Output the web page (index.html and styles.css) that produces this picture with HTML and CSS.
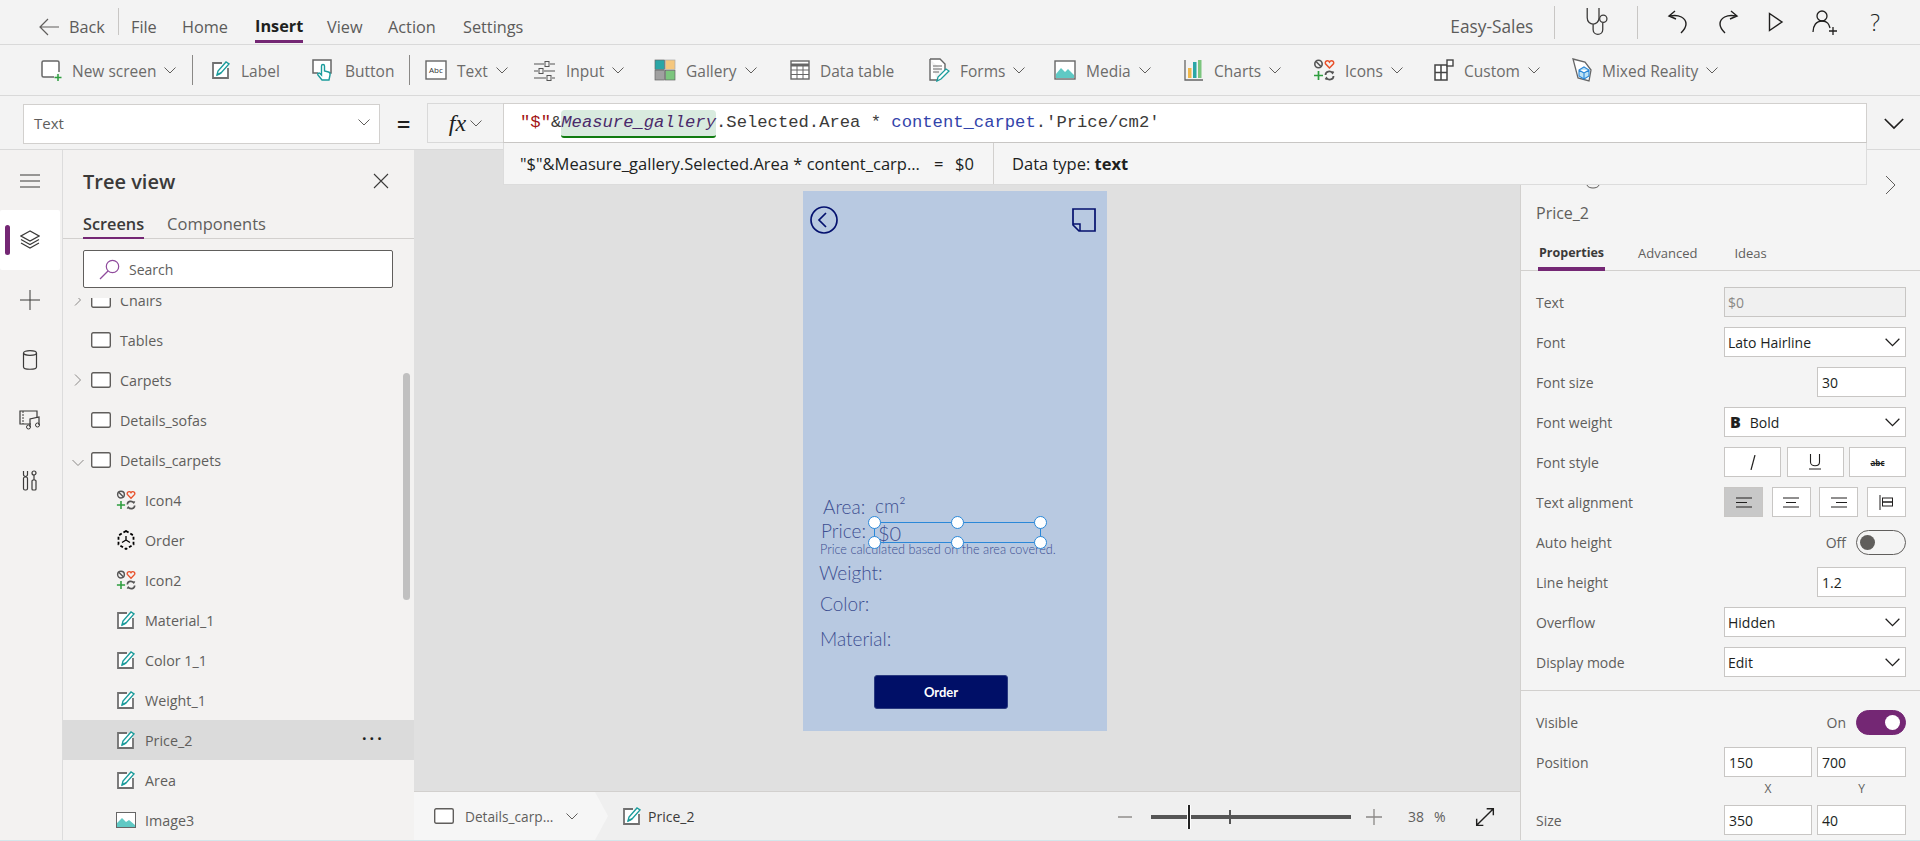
FILE: index.html
```html
<!DOCTYPE html>
<html lang="en">
<head>
<meta charset="utf-8">
<title>Easy-Sales</title>
<link rel="stylesheet" href="styles.css">
</head>
<body>
<svg class="defs" width="0" height="0" aria-hidden="true">
  <symbol id="chev" viewBox="0 0 12 7"><path d="M.5.5 6 6l5.500-5.500" fill="none" stroke="currentColor"/></symbol>
  <symbol id="screen" viewBox="0 0 20 16"><rect x=".7" y=".7" width="18.600" height="14.600" rx="1.500" fill="#fff" stroke="#605e5c" stroke-width="1.400"/></symbol>
  <symbol id="label" viewBox="0 0 20 20"><path d="M11 3H2v15h15V8" fill="#fff" stroke="#707070" stroke-width="1.800"/><path d="M6 15l1-4 8-9 3 2-8 9z" fill="#fff" stroke="#1b9c9c" stroke-width="1.400"/><path d="M6 15l4-2" stroke="#1b9c9c" stroke-width="1.400"/></symbol>
  <symbol id="multi" viewBox="0 0 22 22"><circle cx="5.500" cy="5" r="3.700" fill="none" stroke="#555" stroke-width="1.600"/><path d="M3 2.500l5 5" stroke="#555" stroke-width="1.600"/><path d="M16.500 9l-4-4.200c-1.200-2.800 2.700-4 4-1.800 1.300-2.200 5.200-1 4 1.800z" fill="none" stroke="#e8502a" stroke-width="1.500"/><path d="M5.500 12v9M1 16.500h9" stroke="#2e9e3f" stroke-width="1.700"/><path d="M12.500 16c0-4 5-4.500 7-2l1-1.500M20.500 17c0 4-5 4.500-7 2l-1 1.500" fill="none" stroke="#555" stroke-width="1.800"/></symbol>
</svg>
<div class="app">
  <header class="menu">
    <nav class="menu-left">
      <svg class="back-arrow" width="20" height="18" viewBox="0 0 20 18"><path d="M9 1 1 9l8 8M1 9h19" fill="none" stroke="#605e5c" stroke-width="1.200"/></svg>
      <span class="m-back">Back</span>
      <span class="vsep"></span>
      <span class="m-file">File</span>
      <span class="m-home">Home</span>
      <span class="m-insert">Insert</span>
      <span class="m-view">View</span>
      <span class="m-action">Action</span>
      <span class="m-settings">Settings</span>
    </nav>
    <div class="menu-right">
      <span class="app-name">Easy-Sales</span>
      <span class="vsep tall"></span>
      <svg class="steth" width="30" height="30" viewBox="0 0 26 28"><path d="M2 1v9c0 4 3 6 5.500 6S13 14 13 10V1M7.500 16v5c0 6 9 6 9 0v-6" fill="none" stroke="#3b3a39" stroke-width="1.200"/><circle cx="17" cy="11" r="3.400" fill="none" stroke="#3b3a39" stroke-width="1.200"/></svg>
      <span class="vsep tall"></span>
      <svg class="undo" width="22" height="24" viewBox="0 0 22 24"><path d="M8 1 2 6l7 3M3 6c9-2 16 2 16 8 0 4-3 7-5 9" fill="none" stroke="#201f1e" stroke-width="1.400"/></svg>
      <svg class="redo" width="22" height="24" viewBox="0 0 22 24"><path d="M14 1l6 5-7 3M19 6C10 4 3 8 3 14c0 4 3 7 5 9" fill="none" stroke="#201f1e" stroke-width="1.400"/></svg>
      <svg class="play" width="16" height="20" viewBox="0 0 16 20"><path d="M1.500 1.500v17L14 10z" fill="none" stroke="#201f1e" stroke-width="1.400"/></svg>
      <svg class="user" width="26" height="26" viewBox="0 0 26 26"><circle cx="10" cy="7" r="5" fill="none" stroke="#201f1e" stroke-width="1.300"/><path d="M1 23c0-6 3-11 9-11s7 4 8 7" fill="none" stroke="#201f1e" stroke-width="1.300"/><path d="M21 18v8M17 22h8" stroke="#201f1e" stroke-width="1.300"/></svg>
      <span class="help">?</span>
    </div>
  </header>

  <div class="toolbar">
    <div class="tool"><svg class="ti" width="22" height="22" viewBox="0 0 22 22"><path d="M14 18H3.500A1.500 1.500 0 0 1 2 16.500v-13A1.500 1.500 0 0 1 3.500 2h14A1.500 1.500 0 0 1 19 3.500V13" fill="#fff" stroke="#666" stroke-width="1.500"/><path d="M18 15v7M14.500 18.500h7" stroke="#2e9e3f" stroke-width="1.500"/></svg><span>New screen</span><svg class="chev"><use href="#chev"/></svg></div>
    <span class="tsep"></span>
    <div class="tool"><svg class="ti" width="20" height="20"><use href="#label"/></svg><span>Label</span></div>
    <div class="tool"><svg class="ti" width="24" height="24" viewBox="0 0 24 24"><path d="M7 15H2V2h18v13h-2" fill="#fff" stroke="#666" stroke-width="1.500"/><path d="M11 22l-4-5c-1-1.500 1-2.500 2-1.500l1.500 1.500V8c0-2 3-2 3 0v5l4 1c1.500.5 2 1 1.500 3l-1 5z" fill="#fff" stroke="#1b9c9c" stroke-width="1.400"/></svg><span>Button</span></div>
    <span class="tsep"></span>
    <div class="tool"><svg class="ti" width="22" height="20" viewBox="0 0 22 20"><rect x="1" y="1" width="20" height="18" fill="#fff" stroke="#666" stroke-width="1.400"/><text x="4" y="13" class="abc">Abc</text></svg><span>Text</span><svg class="chev"><use href="#chev"/></svg></div>
    <div class="tool"><svg class="ti" width="22" height="22" viewBox="0 0 22 22"><path d="M0 5h10M16 5h5M0 12h4M10 12h11M0 19h12M18 19h3" stroke="#555" stroke-width="1.200"/><rect x="11" y="2.500" width="4" height="5" fill="none" stroke="#555"/><rect x="5" y="9.500" width="4" height="5" fill="none" stroke="#555"/><rect x="13" y="16.500" width="4" height="5" fill="none" stroke="#555"/></svg><span>Input</span><svg class="chev"><use href="#chev"/></svg></div>
    <div class="tool"><svg class="ti" width="22" height="22" viewBox="0 0 22 22"><rect x="1" y="1" width="9.500" height="9.500" fill="#2aa6a6" stroke="#666" stroke-width=".7"/><rect x="11.500" y="1" width="9.500" height="9.500" fill="#f5c77e" stroke="#aaa" stroke-width=".7"/><rect x="1" y="11.500" width="9.500" height="9.500" fill="#a0a0a0" stroke="#666" stroke-width=".7"/><rect x="11.500" y="11.500" width="9.500" height="9.500" fill="#7cc57e" stroke="#666" stroke-width=".7"/></svg><span>Gallery</span><svg class="chev"><use href="#chev"/></svg></div>
    <div class="tool"><svg class="ti" width="20" height="20" viewBox="0 0 20 20"><rect x="1" y="1" width="18" height="18" fill="#fff" stroke="#666" stroke-width="1.400"/><path d="M1 5h18" stroke="#666" stroke-width="3"/><path d="M1 10h18M1 14.500h18M7 5v14M13 5v14" stroke="#666"/></svg><span>Data table</span></div>
    <div class="tool"><svg class="ti" width="22" height="24" viewBox="0 0 22 24"><path d="M2 1h10l5 5v9M9 22H2V1" fill="#fff" stroke="#666" stroke-width="1.400"/><path d="M5 8h9M5 11h9M5 14h6" stroke="#666"/><path d="M9 23l1-4 8-8 3 2-8 8z" fill="#fff" stroke="#1b9c9c" stroke-width="1.300"/></svg><span>Forms</span><svg class="chev"><use href="#chev"/></svg></div>
    <div class="tool"><svg class="ti" width="22" height="20" viewBox="0 0 22 20"><rect x="1" y="1" width="20" height="18" fill="#fff" stroke="#666" stroke-width="1.400"/><path d="M2 18v-4l5-6 4 4 3-3 6 6v3z" fill="#5fc9c4"/></svg><span>Media</span><svg class="chev"><use href="#chev"/></svg></div>
    <div class="tool"><svg class="ti" width="20" height="22" viewBox="0 0 20 22"><path d="M1 1v20h18" fill="none" stroke="#666" stroke-width="1.300"/><rect x="4" y="9" width="3.500" height="10" fill="#f0b84a"/><rect x="9" y="3" width="3.500" height="16" fill="#2aa6a6"/><rect x="14" y="1" width="3.500" height="18" fill="#7cc57e"/></svg><span>Charts</span><svg class="chev"><use href="#chev"/></svg></div>
    <div class="tool"><svg class="ti" width="22" height="22"><use href="#multi"/></svg><span>Icons</span><svg class="chev"><use href="#chev"/></svg></div>
    <div class="tool"><svg class="ti" width="20" height="22" viewBox="0 0 20 22"><path d="M1 6h12v15H1zM1 13.500h12M7 6v15" fill="#fff" stroke="#444" stroke-width="1.500"/><rect x="13" y="1" width="6" height="6" fill="#fff" stroke="#444" stroke-width="1.400"/></svg><span>Custom</span><svg class="chev"><use href="#chev"/></svg></div>
    <div class="tool"><svg class="ti" width="20" height="24" viewBox="0 0 20 24"><path d="M1 1l12 3 6 8-2 11-11-3z" fill="#fff" stroke="#666" stroke-width="1.300"/><path d="M7 12l5-3 5 3v6l-5 3-5-3zM7 12l5 3 5-3M12 15v6" fill="#bfe3f5" stroke="#2b88d8" stroke-width="1.100"/></svg><span>Mixed Reality</span><svg class="chev"><use href="#chev"/></svg></div>
  </div>

  <div class="formula-row">
    <div class="prop-select"><span>Text</span><svg class="chev"><use href="#chev"/></svg></div>
    <span class="equals">=</span>
    <div class="fx"><i>fx</i><svg class="chev"><use href="#chev"/></svg></div>
    <div class="formula"><span class="str">"$"</span>&amp;<span class="hl">Measure_gallery</span>.Selected.Area * <span class="ref">content_carpet</span>.'Price/cm2'</div>
    <svg class="formula-chev"><use href="#chev"/></svg>
    <div class="formula-pop">
      <span class="pop-expr">"$"&amp;Measure_gallery.Selected.Area * content_carp...</span>
      <span class="pop-eq">=</span>
      <span class="pop-val">$0</span>
      <span class="pop-type">Data type: <b>text</b></span>
    </div>
  </div>

  <div class="workspace">
    <aside class="rail">
      <div class="rail-item first"><svg width="20" height="14" viewBox="0 0 20 14"><path d="M0 1h20M0 7h20M0 13h20" stroke="#3b3a39"/></svg></div>
      <div class="rail-item active"><svg width="20" height="20" viewBox="0 0 20 20"><path d="M10 1 1 6l9 5 9-5zM1 9.500l9 5 9-5M1 13l9 5 9-5" fill="none" stroke="#3b3a39" stroke-width="1.200"/></svg></div>
      <div class="rail-item"><svg width="20" height="20" viewBox="0 0 20 20"><path d="M10 0v20M0 10h20" stroke="#3b3a39"/></svg></div>
      <div class="rail-item"><svg width="16" height="20" viewBox="0 0 16 20"><ellipse cx="8" cy="3" rx="6.500" ry="2.300" fill="none" stroke="#3b3a39" stroke-width="1.200"/><path d="M1.500 3v14c0 3 13 3 13 0V3" fill="none" stroke="#3b3a39" stroke-width="1.200"/></svg></div>
      <div class="rail-item"><svg width="22" height="20" viewBox="0 0 22 20"><path d="M12 14H1V1h17v7" fill="none" stroke="#3b3a39" stroke-width="1.200"/><path d="M4 1v13" stroke="#3b3a39" stroke-dasharray="2 1"/><path d="M11 17V9l9-2v8" fill="none" stroke="#3b3a39" stroke-width="1.200"/><circle cx="9.500" cy="17" r="2" fill="none" stroke="#3b3a39"/><circle cx="18.500" cy="15" r="2" fill="none" stroke="#3b3a39"/></svg></div>
      <div class="rail-item"><svg width="16" height="21" viewBox="0 0 16 21"><rect x="1.500" y="7" width="4" height="13" rx="1.500" fill="none" stroke="#3b3a39" stroke-width="1.200"/><path d="M1.500 1v3.500a2 2 0 0 0 4 0V1" fill="none" stroke="#3b3a39" stroke-width="1.200"/><rect x="10" y="10" width="4" height="10" rx="1" fill="none" stroke="#3b3a39" stroke-width="1.200"/><path d="M12 10V5" stroke="#3b3a39" stroke-width="1.200"/><circle cx="12" cy="3" r="2" fill="none" stroke="#3b3a39" stroke-width="1.200"/></svg></div>
    </aside>

    <section class="tree">
      <div class="tree-head"><h2>Tree view</h2><svg width="16" height="16" viewBox="0 0 16 16"><path d="M1 1l14 14M15 1 1 15" stroke="#3b3a39" stroke-width="1.100"/></svg></div>
      <div class="tree-tabs"><span class="on">Screens</span><span>Components</span></div>
      <div class="search"><svg width="21" height="21" viewBox="0 0 21 21"><circle cx="13.500" cy="7.500" r="6.200" fill="none" stroke="#8f4a9c" stroke-width="1.200"/><path d="M9 12 1 20" stroke="#8f4a9c" stroke-width="1.200"/></svg><span>Search</span></div>
      <div class="tree-list">
        <ul class="rows">
          <li class="row-s"><svg class="arrow"><use href="#chev"/></svg><svg class="si"><use href="#screen"/></svg>Chairs</li>
          <li class="row-s"><svg class="si"><use href="#screen"/></svg>Tables</li>
          <li class="row-s"><svg class="arrow"><use href="#chev"/></svg><svg class="si"><use href="#screen"/></svg>Carpets</li>
          <li class="row-s"><svg class="si"><use href="#screen"/></svg>Details_sofas</li>
          <li class="row-s"><svg class="arrow open"><use href="#chev"/></svg><svg class="si"><use href="#screen"/></svg>Details_carpets</li>
          <li class="row-c"><svg class="ci"><use href="#multi"/></svg>Icon4</li>
          <li class="row-c"><svg class="ci" viewBox="0 0 20 20"><path d="M10 1l7.500 4.500v9L10 19l-7.500-4.500v-9z" fill="none" stroke="#000" stroke-width="1.800" stroke-dasharray="3 2"/><path d="M10 10V6M10 10l-4 2.500M10 10l4 2.500" stroke="#000" stroke-width="1.300"/></svg>Order</li>
          <li class="row-c"><svg class="ci"><use href="#multi"/></svg>Icon2</li>
          <li class="row-c"><svg class="ci"><use href="#label"/></svg>Material_1</li>
          <li class="row-c"><svg class="ci"><use href="#label"/></svg>Color 1_1</li>
          <li class="row-c"><svg class="ci"><use href="#label"/></svg>Weight_1</li>
          <li class="row-c selected"><svg class="ci"><use href="#label"/></svg>Price_2<span class="dots">···</span></li>
          <li class="row-c"><svg class="ci"><use href="#label"/></svg>Area</li>
          <li class="row-c"><svg class="ci" viewBox="0 0 20 16"><rect x=".5" y=".5" width="19" height="15" fill="#fff" stroke="#666"/><path d="M1 15v-4l5-5 4 4 3-2 6 5v2z" fill="#5fc9c4"/></svg>Image3</li>
        </ul>
        <div class="scrollbar"></div>
      </div>
    </section>

    <main class="stage">
      <div class="canvas">
        <div class="phone">
          <svg class="p-back" width="30" height="30" viewBox="0 0 30 30"><circle cx="15" cy="15" r="13" fill="none" stroke="#04116e" stroke-width="1.700"/><path d="M17 8l-7 7 7 7" fill="none" stroke="#04116e" stroke-width="1.700"/></svg>
          <svg class="p-note" width="24" height="24" viewBox="0 0 24 24"><path d="M1 1h22v22H7l-6-6z" fill="none" stroke="#04116e" stroke-width="1.700"/><path d="M1 16h7v7" fill="none" stroke="#04116e" stroke-width="1.500"/></svg>
          <span class="pt p-area">Area:</span>
          <span class="pt p-cm">cm²</span>
          <span class="pt p-price">Price:</span>
          <span class="pt p-val">$0</span>
          <span class="p-note-text">Price calculated based on the area covered.</span>
          <span class="pt p-weight">Weight:</span>
          <span class="pt p-color">Color:</span>
          <span class="pt p-material">Material:</span>
          <button class="p-order" type="button">Order</button>
          <div class="sel">
            <i class="h tl"></i><i class="h tm"></i><i class="h tr"></i>
            <i class="h bl"></i><i class="h bm"></i><i class="h br"></i>
          </div>
        </div>
      </div>
      <footer class="status">
        <div class="crumb-a"><svg class="crumb-si"><use href="#screen"/></svg><span>Details_carp...</span><svg class="chev"><use href="#chev"/></svg></div>
        <div class="crumb-b"><svg class="ci small"><use href="#label"/></svg><span>Price_2</span></div>
        <div class="zoom">
          <span class="z-minus"></span>
          <div class="slider"><i class="thumb"></i><i class="tick"></i></div>
          <svg width="16" height="16" viewBox="0 0 16 16"><path d="M8 0v16M0 8h16" stroke="#8a8886" stroke-width="1.300"/></svg>
          <span class="pct">38</span><span class="pct-s">%</span>
          <svg class="expand" width="20" height="20" viewBox="0 0 24 24"><path d="M2 22 22 2M14 2h8v8M2 14v8h8" fill="none" stroke="#201f1e" stroke-width="1.700"/></svg>
        </div>
      </footer>
    </main>

    <aside class="props">
      <svg class="gear-arc" width="14" height="6" viewBox="0 0 14 6"><path d="M1 0c1 4 11 4 12 0" fill="none" stroke="#605e5c"/></svg>
      <div class="props-top"><svg width="11" height="20" viewBox="0 0 11 20"><path d="M1 1l9 9-9 9" fill="none" stroke="#605e5c"/></svg></div>
      <div class="props-name">Price_2</div>
      <div class="props-tabs"><span class="on">Properties</span><span class="t-adv">Advanced</span><span class="t-ideas">Ideas</span></div>
      <div class="row"><label>Text</label><div class="ctl wide dis">$0</div></div>
      <div class="row"><label>Font</label><div class="ctl wide"><span>Lato Hairline</span><svg class="chev"><use href="#chev"/></svg></div></div>
      <div class="row"><label>Font size</label><div class="ctl num">30</div></div>
      <div class="row"><label>Font weight</label><div class="ctl wide"><span><b class="bold-b">B</b>Bold</span><svg class="chev"><use href="#chev"/></svg></div></div>
      <div class="row"><label>Font style</label>
        <div class="btns three">
          <div class="ctl btn"><svg width="6" height="15" viewBox="0 0 6 15"><path d="M5 0 1 15" stroke="#201f1e" stroke-width="1.200"/></svg></div>
          <div class="ctl btn"><svg width="12" height="16" viewBox="0 0 12 16"><path d="M1.500 0v8c0 5 9 5 9 0V0M0 15h12" fill="none" stroke="#201f1e" stroke-width="1.100"/></svg></div>
          <div class="ctl btn"><span class="strike">abc</span></div>
        </div>
      </div>
      <div class="row"><label>Text alignment</label>
        <div class="btns four">
          <div class="ctl btn act"><svg width="16" height="11" viewBox="0 0 16 11"><path d="M0 1h16M0 5.500h11M0 10h16" stroke="#201f1e"/></svg></div>
          <div class="ctl btn"><svg width="16" height="11" viewBox="0 0 16 11"><path d="M0 1h16M3 5.500h10M0 10h16" stroke="#201f1e"/></svg></div>
          <div class="ctl btn"><svg width="16" height="11" viewBox="0 0 16 11"><path d="M0 1h16M5 5.500h11M0 10h16" stroke="#201f1e"/></svg></div>
          <div class="ctl btn"><svg width="15" height="15" viewBox="0 0 15 15"><path d="M1 0v15" stroke="#201f1e"/><rect x="3.500" y="3" width="10" height="4" fill="none" stroke="#201f1e"/><rect x="3.500" y="7" width="10" height="4" fill="none" stroke="#201f1e"/></svg></div>
        </div>
      </div>
      <div class="row"><label>Auto height</label><div class="tg-wrap"><span>Off</span><span class="toggle"><i></i></span></div></div>
      <div class="row"><label>Line height</label><div class="ctl num">1.2</div></div>
      <div class="row"><label>Overflow</label><div class="ctl wide"><span>Hidden</span><svg class="chev"><use href="#chev"/></svg></div></div>
      <div class="row"><label>Display mode</label><div class="ctl wide"><span>Edit</span><svg class="chev"><use href="#chev"/></svg></div></div>
      <div class="divider"></div>
      <div class="row"><label>Visible</label><div class="tg-wrap"><span>On</span><span class="toggle on"><i></i></span></div></div>
      <div class="row"><label>Position</label><div class="pair"><div class="ctl half">150</div><div class="ctl num">700</div></div></div>
      <div class="axis"><span class="half-t">X</span><span class="num-t">Y</span></div>
      <div class="row"><label>Size</label><div class="pair"><div class="ctl half">350</div><div class="ctl num">40</div></div></div>
    </aside>
  </div>
</div>
</body>
</html>
```

FILE: styles.css
```css
* { box-sizing: border-box; }
html, body { margin: 0; padding: 0; height: 100%; overflow: hidden; }
body { font-family: "Open Sans", "Noto Sans", sans-serif; color: #605e5c; background: #f3f3f3; font-size: 15px; }
.defs { position: absolute; }
.app { height: 841px; display: flex; flex-direction: column; overflow: hidden; border-bottom: 1px solid #d3e6ea; }

.menu { height: 45px; flex: none; display: flex; justify-content: space-between; align-items: center; border-bottom: 1px solid #d9d9d9; background: #f3f3f3; font-size: 16.300px; color: #5c5b5a; }
.menu-left { display: grid; grid-template-columns: 30px 49px 13px 51px 73px 72px 61px 75px auto; align-items: center; padding: 9px 0 0 39px; height: 100%; }
.menu-left .vsep { height: 27px; margin-top: -10px; }
.m-insert { font-weight: 700; color: #201f1e; display: flex; align-items: center; justify-self: start; border-bottom: 3px solid #742774; height: 31px; margin-top: 2px; }
.vsep { width: 1px; height: 33px; background: #c8c6c4; }
.menu-right { display: grid; grid-template-columns: 104px 30px 53px 30px 50px 51px 44px 58px auto; align-items: center; padding-right: 40px; height: 100%; }
.app-name { font-size: 17.300px; padding-top: 8px; white-space: nowrap; }
.help { font-size: 23px; color: #201f1e; font-weight: 300; line-height: 1; }

.toolbar { height: 51px; flex: none; display: grid; grid-template-columns: 152px 19px 100px 98px 16px 109px 120px 136px 138px 126px 130px 129px 121px 138px auto; align-items: center; padding-left: 40px; border-bottom: 1px solid #d9d9d9; background: #f3f3f3; }
.tool { display: flex; align-items: center; white-space: nowrap; color: #6c6b6a; font-size: 15.500px; }
.tool span { padding-top: 2px; }
.ti { flex: none; margin-right: 10px; }
.tool .chev { margin-left: 8px; }
.chev { width: 12px; height: 7px; flex: none; color: #605e5c; overflow: visible; }
.tsep { width: 1px; height: 30px; background: #8a8886; }
.abc { font: 8px "Open Sans", sans-serif; fill: #333; }

.formula-row { height: 54px; flex: none; position: relative; display: flex; align-items: flex-start; padding: 7px 0 0 23px; border-bottom: 1px solid #d9d9d9; background: #f3f3f3; }
.prop-select { width: 357px; height: 40px; margin-top: 1px; background: #fff; border: 1px solid #d2d0ce; display: flex; justify-content: space-between; align-items: center; padding: 0 9px 3px 10px; }
.equals { width: 47px; text-align: center; font-size: 24px; font-weight: 600; color: #201f1e; line-height: 42px; }
.fx { width: 76px; height: 40px; background: #f3f3f3; border: 1px solid #d9d9d9; border-right: 0; display: flex; justify-content: center; align-items: center; gap: 4px; }
.fx i { font: italic 24px "Liberation Serif", serif; color: #201f1e; }
.formula { width: 1364px; height: 40px; background: #fff; border: 1px solid #d2d0ce; border-bottom-color: #c8c6c4; padding-left: 16px; font: 17.200px/38px "Liberation Mono", monospace; color: #3b3a39; white-space: nowrap; }
.str { color: #a31515; }
.ref { color: #3344aa; }
.hl { display: inline-block; height: 28px; line-height: 26px; vertical-align: top; margin-top: 6px; font-style: italic; color: #4a2a6a; background: #d9ebdf; border-bottom: 2px solid #107c10; border-radius: 4px 4px 3px 3px; }
.formula-chev { width: 20px; height: 12px; margin: 15px 0 0 17px; color: #201f1e; }
.formula-pop { position: absolute; left: 503px; top: 47px; width: 1364px; height: 42px; background: #f5f5f5; border: 1px solid #dcdcdc; border-top: 0; display: flex; align-items: center; padding-left: 16px; color: #201f1e; font-size: 16.500px; z-index: 5; }
.pop-expr { width: 414px; white-space: nowrap; overflow: hidden; }
.pop-eq { width: 21px; }
.pop-val { width: 38px; }
.pop-type { border-left: 1px solid #d2d0ce; height: 100%; line-height: 41px; padding-left: 18px; }

.workspace { flex: 1; min-height: 0; display: flex; }
.rail { width: 63px; flex: none; background: #f3f2f1; border-right: 1px solid #dcdcdc; }
.rail-item { height: 60px; display: flex; align-items: center; justify-content: center; position: relative; width: 60px; }
.rail-item.first { padding-top: 2px; }
.rail-item.active { background: #fff; border-radius: 2px; }
.rail-item.active::before { content: ""; position: absolute; left: 5px; top: 15px; width: 5px; height: 30px; background: #742774; border-radius: 3px; }

.tree { width: 351px; flex: none; background: #f3f2f1; display: flex; flex-direction: column; }
.tree-head { height: 60px; display: flex; justify-content: space-between; align-items: center; padding: 2px 25px 0 20px; }
.tree-head h2 { margin: 0; font-size: 20px; font-weight: 600; color: #3b3a39; }
.tree-tabs { height: 29px; display: flex; gap: 23px; padding-left: 20px; border-bottom: 1px solid #d2d0ce; font-size: 16.500px; line-height: 27px; }
.tree-tabs span { height: 29px; }
.tree-tabs .on { color: #3b3a39; font-weight: 600; border-bottom: 2px solid #742774; font-size: 16.300px; line-height: 29px; }
.search { margin: 11px 21px 10px 20px; height: 38px; flex: none; background: #fff; border: 1px solid #605e5c; border-radius: 2px; display: flex; align-items: center; gap: 9px; padding-left: 15px; font-size: 14px; }
.tree-list { flex: 1; min-height: 0; overflow: hidden; position: relative; }
.rows { list-style: none; margin: -18px 0 0; padding: 0; }
.rows li { height: 40px; display: flex; align-items: center; position: relative; font-size: 14.300px; white-space: nowrap; }
.row-s { padding-left: 28px; }
.row-c { padding-left: 53px; }
.selected { background: #dbdbdb; }
.arrow { position: absolute; left: 9px; top: 14px; width: 12px; height: 12px; transform: rotate(-90deg); color: #8a8886; }
.arrow.open { transform: none; top: 17px; }
.si { width: 20px; height: 16px; margin-right: 9px; flex: none; }
.ci { width: 20px; height: 20px; margin-right: 9px; flex: none; }
.dots { position: absolute; left: 299px; top: 6px; font-size: 16px; line-height: 24px; font-weight: 700; color: #201f1e; letter-spacing: 3px; }
.scrollbar { position: absolute; left: 340px; top: 75px; width: 7px; height: 227px; background: #c0c0c0; border-radius: 4px; }

.stage { flex: 1; min-width: 0; display: flex; flex-direction: column; }
.canvas { flex: 1; min-height: 0; background: #e0e0e0; padding: 41px 0 0 389px; overflow: hidden; border-bottom: 1px solid #d2d0ce; }
.phone { position: relative; width: 304px; height: 540px; background: #b8c9e1; font-family: Lato, sans-serif; color: #3d4f91; }
.p-back { position: absolute; left: 6px; top: 14px; }
.p-note { position: absolute; left: 269px; top: 17px; }
.pt { position: absolute; font-size: 19px; font-weight: 300; line-height: 24px; white-space: nowrap; }
.p-area { left: 20px; top: 304px; }
.p-cm { left: 72px; top: 303px; }
.p-price { left: 18px; top: 328px; }
.p-val { left: 75px; top: 330px; font-size: 20px; }
.p-note-text { position: absolute; left: 17px; top: 350px; font-size: 12.700px; font-weight: 300; white-space: nowrap; line-height: 16px; }
.p-weight { left: 16px; top: 370px; }
.p-color { left: 17px; top: 401px; }
.p-material { left: 17px; top: 436px; }
.p-order { position: absolute; left: 71px; top: 484px; width: 134px; height: 34px; background: #000f67; color: #fff; border: 1px solid #2a3a80; border-radius: 3px; font: 700 13px Lato, sans-serif; }
.sel { position: absolute; left: 71px; top: 331px; width: 167px; height: 21px; border: 1px solid #2b88d8; }
.h { position: absolute; width: 13px; height: 13px; background: #fff; border: 1.500px solid #2b88d8; border-radius: 50%; }
.tl { left: -7px; top: -7px; } .tm { left: 76px; top: -7px; } .tr { left: 159px; top: -7px; }
.bl { left: -7px; top: 13px; } .bm { left: 76px; top: 13px; } .br { left: 159px; top: 13px; }

.status { height: 48px; flex: none; display: flex; align-items: center; background: #efefef; font-size: 14px; }
.crumb-a { width: 194px; height: 100%; display: flex; align-items: center; padding-left: 20px; background: #f6f6f6; clip-path: polygon(0 0, 181px 0, 194px 50%, 181px 100%, 0 100%); }
.crumb-a span { margin-left: 11px; width: 101px; white-space: nowrap; overflow: hidden; font-size: 13.700px; }
.crumb-si { width: 20px; height: 18px; flex: none; }
.crumb-b { display: flex; align-items: center; margin-left: 14px; color: #3b3a39; }
.ci.small { margin-right: 6px; }
.zoom { margin-left: auto; display: flex; align-items: center; padding: 1px 25px 0 0; }
.z-minus { width: 14px; height: 2px; background: #a8a6a4; margin-right: 19px; }
.slider { width: 200px; height: 4px; background: #555; position: relative; margin-right: 15px; }
.thumb { position: absolute; left: 36px; top: -10px; width: 4px; height: 24px; background: #222; border: 1px solid #fff; border-width: 0 1px; }
.tick { position: absolute; left: 78px; top: -5px; width: 2px; height: 14px; background: #555; }
.pct { margin-left: 26px; width: 26px; color: #605e5c; }
.pct-s { width: 41px; }

.props { width: 400px; flex: none; background: #f4f4f4; border-left: 1px solid #d2d0ce; padding: 0 14px 0 15px; position: relative; }
.gear-arc { position: absolute; left: 65px; top: 35px; }
.props-top { height: 50px; display: flex; justify-content: flex-end; align-items: flex-end; padding: 0 10px 5px 0; }
.props-name { height: 24px; font-size: 16px; line-height: 26px; }
.props-tabs { height: 47px; margin: 0 -14px 11px -15px; padding: 0 0 0 17px; display: flex; align-items: flex-end; border-bottom: 1px solid #d2d0ce; font-size: 13px; }
.props-tabs span { height: 27px; line-height: 20px; }
.t-adv { margin-left: 33px; }
.t-ideas { margin-left: 37px; }
.props-tabs .on { font-weight: 700; font-size: 12.500px; color: #3b3a39; border-bottom: 4px solid #742774; padding: 0 1px; margin-bottom: -1px; height: 28px; }
.row { height: 40px; display: flex; justify-content: space-between; align-items: center; font-size: 14px; }
.row label { color: #605e5c; }
.ctl { height: 30px; background: #fff; border: 1px solid #c8c6c4; display: flex; align-items: center; padding: 0 3px; color: #201f1e; font-size: 14px; }
.wide { width: 182px; justify-content: space-between; padding-right: 5px; }
.wide .chev { width: 15px; height: 9px; color: #201f1e; }
.dis { background: #f0f0f0; color: #8a8886; }
.num { width: 89px; padding-left: 4px; }
.bold-b { font-size: 16px; font-weight: 800; margin: 0 9px 0 2px; }
.btns { width: 182px; display: flex; justify-content: space-between; }
.btn { justify-content: center; padding: 0; flex: none; }
.three .btn { width: 57px; }
.four .btn { width: 39px; }
.btn.act { background: #c8c8c8; }
.strike { font-size: 8px; text-decoration: line-through; font-weight: 700; }
.tg-wrap { display: flex; align-items: center; gap: 10px; }
.toggle { width: 50px; height: 25px; border: 1px solid #605e5c; border-radius: 13px; display: flex; align-items: center; padding: 0 5px 0 3px; }
.toggle i { width: 15px; height: 15px; border-radius: 50%; background: #605e5c; }
.toggle.on { background: #742774; border-color: #742774; justify-content: flex-end; }
.toggle.on i { background: #fff; }
.divider { height: 1px; background: #d2d0ce; margin: 8px -14px 11px -15px; }
.pair { display: flex; gap: 5px; }
.half { width: 88px; padding-left: 4px; }
.axis { display: flex; gap: 5px; height: 20px; padding-left: 188px; font-size: 12px; line-height: 13px; margin-top: -2px; padding-top: 2px; }
.half-t { width: 88px; text-align: center; }
.num-t { width: 89px; text-align: center; }
```
